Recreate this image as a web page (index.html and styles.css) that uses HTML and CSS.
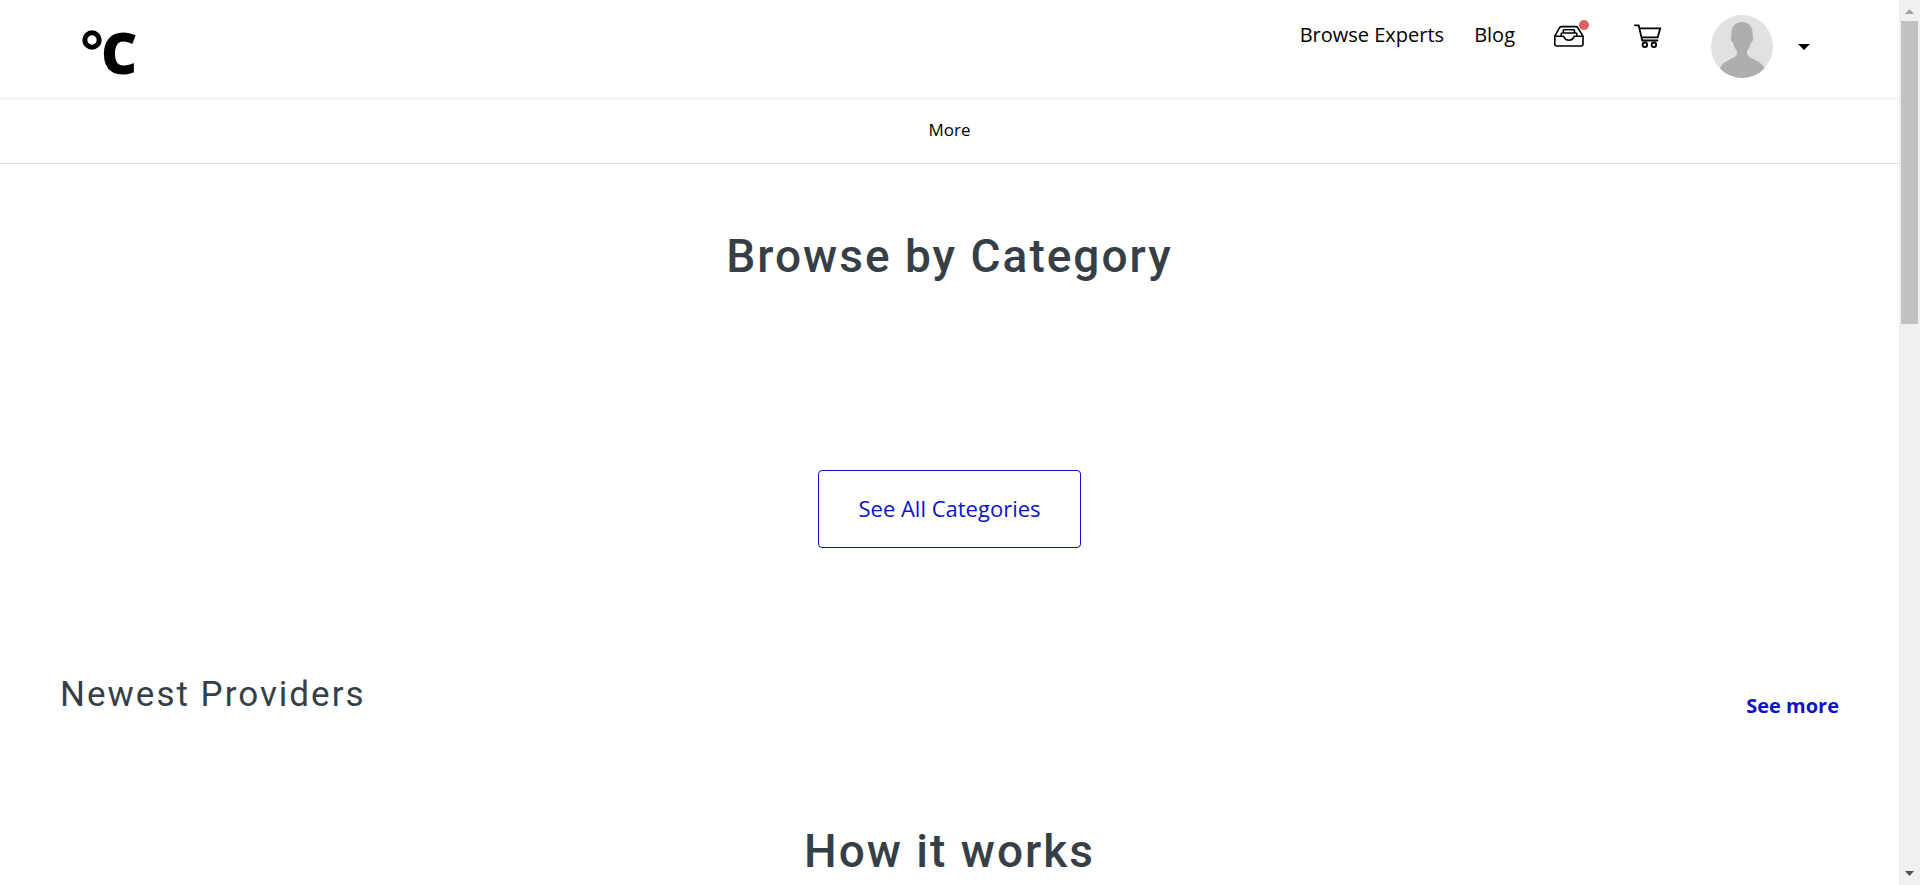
FILE: index.html
```html
<!DOCTYPE html>
<html lang="en">
<head>
<meta charset="utf-8">
<title>Browse by Category</title>
<link rel="stylesheet" href="styles.css">
</head>
<body>
<div class="page">
  <header class="topbar">
    <a class="logo" href="#" aria-label="Home">
      <svg width="64" height="68" viewBox="0 0 64 68">
        <circle cx="14" cy="25" r="7.2" fill="none" stroke="#000" stroke-width="5"/>
        <text class="logo-letter" x="23" y="59">C</text>
      </svg>
    </a>
    <nav class="topnav">
      <a class="navlink" href="#">Browse Experts</a>
      <a class="navlink" href="#">Blog</a>
      <a class="inbox" href="#" aria-label="Inbox">
        <svg width="32" height="24" viewBox="0 0 32 24" fill="none" stroke="#000" stroke-width="1.6" stroke-linejoin="round" stroke-linecap="round">
          <path d="M1.8 12.2 L6.6 3.6 Q7.2 2.6 8.4 2.6 H22.8 Q24 2.6 24.7 3.6 L30 12.2 V20 Q30 22 28 22 H3.8 Q1.8 22 1.8 20 Z"/>
          <path d="M2 12.3 H10.4 C11.2 12.3 11 16.2 15.9 16.2 S20.6 12.3 21.4 12.3 H29.8"/>
          <path d="M8.2 11.6 V9.8 Q8.2 9 9 9 H23 Q23.8 9 23.8 9.8 V11.6 M10.3 8.6 V6.6 Q10.3 5.8 11.1 5.8 H20.7 Q21.5 5.8 21.5 6.6 V8.6"/>
        </svg>
        <span class="dot"></span>
      </a>
      <a class="cart" href="#" aria-label="Cart">
        <svg width="28" height="24" viewBox="0 0 28 24" fill="none" stroke="#000" stroke-width="1.8">
          <path d="M.2 1.3 H4.7 L8.2 16.5 H24.2"/>
          <path d="M5.6 4.3 H26.2 L23.7 13.4 H7.6"/>
          <circle cx="10.9" cy="20.8" r="2.3"/>
          <circle cx="19.9" cy="20.8" r="2.3"/>
        </svg>
      </a>
    </nav>
    <button class="account" type="button" aria-label="Account menu">
      <svg width="62" height="64" viewBox="0 0 62 64">
        <ellipse cx="31" cy="31.5" rx="31" ry="31.5" fill="#e1e1e1"/>
        <path fill="#aeaeae" d="M9 53.4 C11 47 18 45.5 23.5 42 C26.5 40 26 37.5 25.8 36 C23.7 33 22.6 30.5 22.2 27.5 C20.8 27.4 20 25.5 19.7 23.8 Q19.9 22.3 20.4 22 C20 16 20.8 11.5 25 8.8 C29.5 5.8 36.5 7 39.5 11 C41.5 14 42 17.5 41.7 22 Q42.5 22.5 42.4 24 C42 25.6 41 27.4 39.7 27.5 C39.2 31 38 33.5 36 36 C35.8 38 35.8 40 38.5 42 C44 45.5 51 47 53.4 53.4 A31 31.5 0 0 1 9 53.4 Z"/>
      </svg>
      <svg width="12" height="6" viewBox="0 0 12 6"><path d="M0 0 H12 L6 6 Z"/></svg>
    </button>
  </header>
  <nav class="categories"><a class="more" href="#">More</a></nav>
  <main>
    <section class="browse">
      <h2 class="heading">Browse by Category</h2>
      <button class="see-all" type="button">See All Categories</button>
    </section>
    <section class="newest">
      <h3 class="subheading">Newest Providers</h3>
      <a class="see-more" href="#">See more</a>
    </section>
    <section class="how">
      <h2 class="heading">How it works</h2>
    </section>
  </main>
</div>
<div class="scrollbar" aria-hidden="true">
  <svg width="9" height="5" viewBox="0 0 9 5"><path d="M0 5 H9 L4.5 0 Z" fill="#a3a3a3"/></svg>
  <div class="track"><div class="thumb"></div></div>
  <svg width="9" height="5" viewBox="0 0 9 5"><path d="M0 0 H9 L4.5 5 Z" fill="#505050"/></svg>
</div>
</body>
</html>
```

FILE: styles.css
```css
* { box-sizing: border-box; }
body {
  margin: 0;
  height: 100vh;
  display: flex;
  overflow: hidden;
  background: #fff;
  color: #000;
  font-family: "Open Sans", "Noto Sans", sans-serif;
}
a { color: inherit; text-decoration: none; }
svg { display: block; overflow: visible; }
button { font: inherit; cursor: pointer; }

.page { flex: 1; min-width: 0; overflow: hidden; }

.topbar {
  display: flex;
  align-items: flex-start;
  height: 99px;
  padding: 15px 89px 0 78px;
  border-bottom: 1px solid #ebebeb;
}
.logo-letter { font: 800 56px "Open Sans", sans-serif; }
.topnav {
  display: flex;
  align-items: center;
  height: 40px;
  margin-left: auto;
  font-size: 20px;
  line-height: 40px;
}
.navlink { margin-right: 30px; }
.inbox { position: relative; margin: 2px 49px 0 8px; }
.cart { margin-top: 2px; }
.dot {
  position: absolute;
  top: -4px;
  right: -4px;
  width: 10px;
  height: 10px;
  border-radius: 50%;
  background: #e25d5d;
}
.account {
  display: flex;
  align-items: center;
  gap: 25px;
  margin-left: 49px;
  padding: 0;
  border: 0;
  background: none;
}

.categories {
  display: flex;
  justify-content: center;
  height: 65px;
  border-bottom: 1px solid #dedede;
  font-size: 17px;
  line-height: 62px;
}

.heading, .subheading {
  margin: 0;
  color: #363f47;
  font-family: Roboto, sans-serif;
  letter-spacing: 2px;
}
.heading { font-size: 46px; font-weight: 500; line-height: 52px; text-align: center; }
.subheading { font-size: 35px; font-weight: 400; line-height: 42px; }

.browse {
  display: flex;
  flex-direction: column;
  align-items: center;
  gap: 188px;
  padding-top: 66px;
}
.see-all {
  height: 78px;
  padding: 0 39px 2px;
  border: 1px solid #0a14c8;
  border-radius: 4px;
  background: #fff;
  color: #0a14c8;
  font-size: 22px;
}
.newest {
  display: flex;
  justify-content: space-between;
  align-items: flex-end;
  height: 92px;
  margin: 80px 60px 0;
}
.subheading { margin-bottom: 4px; }
.see-more { color: #0a14c8; font-size: 20px; font-weight: 700; line-height: 28px; }
.how { padding-top: 105px; }

.scrollbar {
  display: flex;
  flex-direction: column;
  align-items: center;
  width: 21px;
  padding: 9px 2px;
  background: #f0f0f0;
}
.track { flex: 1; align-self: stretch; padding-top: 7px; }
.thumb { height: 303px; background: #c1c1c1; }
```
